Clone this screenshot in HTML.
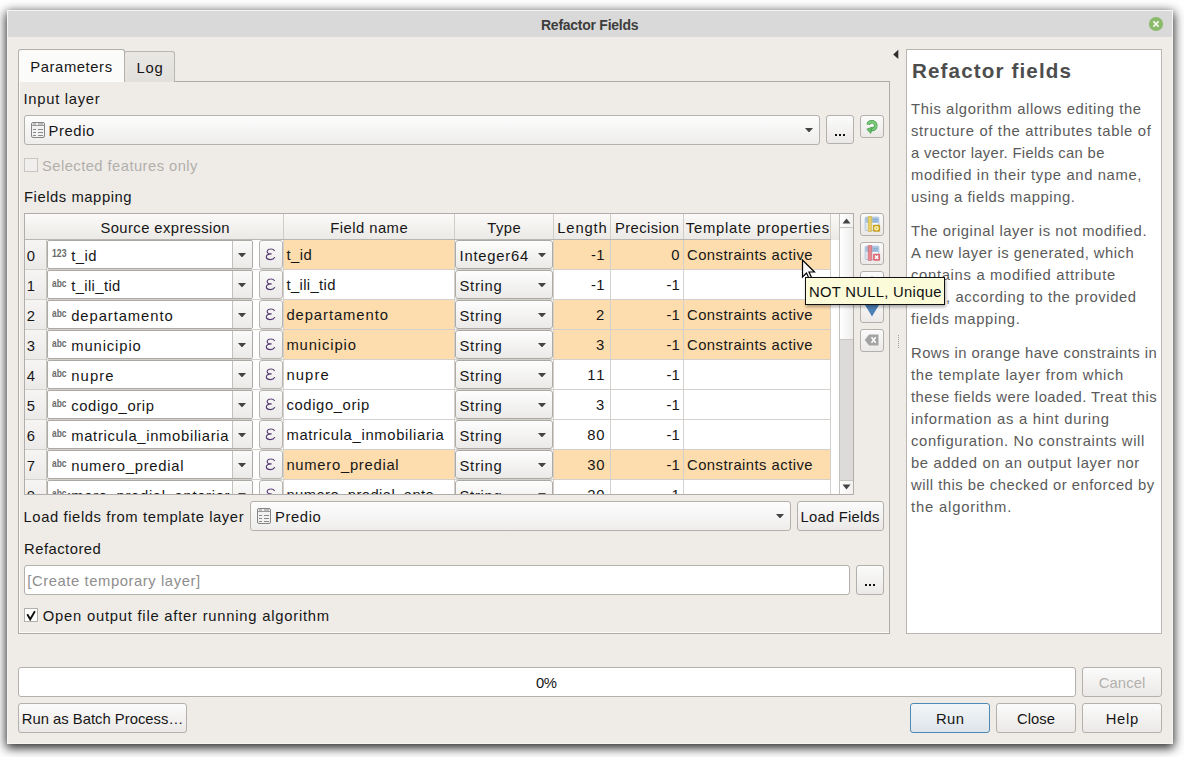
<!DOCTYPE html><html><head><meta charset="utf-8"><style>
*{margin:0;padding:0}
html,body{width:1184px;height:757px;overflow:hidden;background:#ffffff;font-family:"Liberation Sans",sans-serif;position:relative}
.t{position:absolute;white-space:nowrap;font-family:"Liberation Sans",sans-serif}
.b{position:absolute;box-sizing:border-box}
</style></head><body><div class="b" style="left:7px;top:10px;width:1166px;height:734px;background:#efece8;border:1px solid #f6f4f2;box-shadow:0 3px 10px 1px rgba(0,0,0,0.85);"></div>
<div class="b" style="left:8px;top:11px;width:1164px;height:26px;background:#d9d9d9;"></div>
<div class="t" style="left:541.00px;top:17.00px;font-size:14px;line-height:17px;color:#3d3d3d;letter-spacing:-0.260px;font-weight:bold;">Refactor Fields</div>
<svg class="b" style="left:1148px;top:16px" width="16" height="16" viewBox="0 0 16 16"><circle cx="8" cy="8" r="7.1" fill="#8cba6c"/><path d="M5.4 5.4L10.6 10.6M10.6 5.4L5.4 10.6" stroke="#f2f9ec" stroke-width="1.7" stroke-linecap="butt"/></svg>
<div class="b" style="left:18px;top:81px;width:872px;height:553px;border:1px solid #aeaba7;background:#efece8;box-shadow:inset 1px 0 0 #fcfbfa,inset 0 -1px 0 #fcfbfa;"></div>
<div class="b" style="left:124px;top:51px;width:51px;height:31px;border:1px solid #b9b6b2;border-bottom:none;border-radius:3px 3px 0 0;background:linear-gradient(#e9e7e4,#e2e0dd);"></div>
<div class="b" style="left:18px;top:49px;width:107px;height:33px;border:1px solid #b3b0ac;border-bottom:none;border-radius:3px 3px 0 0;background:#fbfbfa;"></div>
<div class="t" style="left:30.30px;top:58.00px;font-size:14.8px;line-height:18px;color:#161616;letter-spacing:0.584px;font-weight:normal;">Parameters</div>
<div class="t" style="left:136.60px;top:59.00px;font-size:14.8px;line-height:18px;color:#161616;letter-spacing:0.726px;font-weight:normal;">Log</div>
<svg class="b" style="left:891px;top:49px" width="9" height="11"><path d="M7.3 0.8L2.2 5.4L7.3 10Z" fill="#2e2e2e"/></svg>
<div class="t" style="left:23.50px;top:90.00px;font-size:14.8px;line-height:18px;color:#161616;letter-spacing:0.711px;font-weight:normal;">Input layer</div>
<div class="b" style="left:24px;top:115px;width:796px;height:30px;border:1px solid #b4b1ad;border-radius:3px;background:linear-gradient(#fdfdfd,#eeedec);"></div>
<svg class="b" style="left:31px;top:122px" width="14" height="16" viewBox="0 0 14 16"><rect x="0.5" y="0.5" width="13" height="15" rx="1.5" fill="#f2f2f2" stroke="#858585"/><path d="M1 3.5H13" stroke="#9a9a9a" stroke-width="1"/><path d="M2 2H5M7 2H12M2 7.5H5M7 7.5H12M2 10.5H5M7 10.5H12M2 13.5H5M7 13.5H12" stroke="#8a8a8a" stroke-width="1.1"/></svg>
<div class="t" style="left:48.50px;top:122.00px;font-size:14.8px;line-height:18px;color:#161616;letter-spacing:0.610px;font-weight:normal;">Predio</div>
<svg class="b" style="left:805.0px;top:127.75px" width="8" height="4.5"><path d="M0 0L8 0L4.0 4.5Z" fill="#444"/></svg>
<div class="b" style="left:826px;top:115px;width:28px;height:29px;border:1px solid #b4b1ad;border-radius:3px;background:linear-gradient(#fbfbfb,#ebe9e7);"></div>
<div class="b" style="left:835px;top:134px;width:2px;height:2px;background:#111;"></div>
<div class="b" style="left:839px;top:134px;width:2px;height:2px;background:#111;"></div>
<div class="b" style="left:843px;top:134px;width:2px;height:2px;background:#111;"></div>
<div class="b" style="left:860px;top:115px;width:24px;height:23px;border:1px solid #b4b1ad;border-radius:3px;background:linear-gradient(#fbfbfb,#ebe9e7);"></div>
<svg class="b" style="left:864px;top:117px" width="17" height="18" viewBox="0 0 17 18"><path d="M4.13 7.59A3.9 3.9 0 1 1 6.25 12.13" fill="none" stroke="#3f9a45" stroke-width="3.6"/><path d="M4.13 7.59A3.9 3.9 0 1 1 6.25 12.13" fill="none" stroke="#80cc7e" stroke-width="2.1"/><path d="M2.9 12.2L8.3 10.2L6.7 16.4Z" fill="#6cbf6a" stroke="#3f9a45" stroke-width="0.8" stroke-linejoin="round"/></svg>
<div class="b" style="left:24px;top:158px;width:14px;height:14px;border:1px solid #c9c6c2;background:#f1efed;"></div>
<div class="t" style="left:42.00px;top:157.00px;font-size:14.8px;line-height:18px;color:#b2afab;letter-spacing:0.430px;font-weight:normal;">Selected features only</div>
<div class="t" style="left:24.00px;top:188.00px;font-size:14.8px;line-height:18px;color:#161616;letter-spacing:0.552px;font-weight:normal;">Fields mapping</div>
<div class="t" style="left:23.50px;top:508.00px;font-size:14.8px;line-height:18px;color:#161616;letter-spacing:0.593px;font-weight:normal;">Load fields from template layer</div>
<div class="b" style="left:250px;top:501px;width:541px;height:30px;border:1px solid #b4b1ad;border-radius:3px;background:linear-gradient(#fdfdfd,#eeedec);"></div>
<svg class="b" style="left:257px;top:508px" width="14" height="16" viewBox="0 0 14 16"><rect x="0.5" y="0.5" width="13" height="15" rx="1.5" fill="#f2f2f2" stroke="#858585"/><path d="M1 3.5H13" stroke="#9a9a9a" stroke-width="1"/><path d="M2 2H5M7 2H12M2 7.5H5M7 7.5H12M2 10.5H5M7 10.5H12M2 13.5H5M7 13.5H12" stroke="#8a8a8a" stroke-width="1.1"/></svg>
<div class="t" style="left:275.00px;top:508.00px;font-size:14.8px;line-height:18px;color:#161616;letter-spacing:0.610px;font-weight:normal;">Predio</div>
<svg class="b" style="left:776.0px;top:513.75px" width="8" height="4.5"><path d="M0 0L8 0L4.0 4.5Z" fill="#444"/></svg>
<div class="b" style="left:797px;top:501px;width:87px;height:30px;border:1px solid #b4b1ad;border-radius:3px;background:linear-gradient(#fbfbfb,#ebe9e7);"></div>
<div class="t" style="left:800.50px;top:508.00px;font-size:14.8px;line-height:18px;color:#161616;letter-spacing:0.236px;font-weight:normal;">Load Fields</div>
<div class="t" style="left:24.00px;top:540.00px;font-size:14.8px;line-height:18px;color:#161616;letter-spacing:0.493px;font-weight:normal;">Refactored</div>
<div class="b" style="left:24px;top:565px;width:826px;height:30px;border:1px solid #b4b1ad;border-radius:3px;background:#ffffff;"></div>
<div class="t" style="left:27.30px;top:572.00px;font-size:14.8px;line-height:18px;color:#8e8e8e;letter-spacing:0.575px;font-weight:normal;">[Create temporary layer]</div>
<div class="b" style="left:856px;top:565px;width:28px;height:30px;border:1px solid #b4b1ad;border-radius:3px;background:linear-gradient(#fbfbfb,#ebe9e7);"></div>
<div class="b" style="left:865px;top:584px;width:2px;height:2px;background:#111;"></div>
<div class="b" style="left:869px;top:584px;width:2px;height:2px;background:#111;"></div>
<div class="b" style="left:873px;top:584px;width:2px;height:2px;background:#111;"></div>
<div class="b" style="left:24px;top:608px;width:14px;height:14px;border:1px solid #b4b1ad;background:#ffffff;"></div>
<svg class="b" style="left:24px;top:608px" width="14" height="14"><path d="M3.3 6.3L6.2 11.3L10.9 3.3" fill="none" stroke="#111" stroke-width="1.9" stroke-linejoin="miter"/></svg>
<div class="t" style="left:42.80px;top:607.00px;font-size:14.8px;line-height:18px;color:#161616;letter-spacing:0.762px;font-weight:normal;">Open output file after running algorithm</div>
<div class="b" style="left:906px;top:49px;width:256px;height:585px;border:1px solid #b9b6b2;background:#ffffff;"></div>
<div class="t" style="left:912.00px;top:58.00px;font-size:20.6px;line-height:25px;color:#4d4d4d;letter-spacing:1.136px;font-weight:bold;">Refactor fields</div>
<div class="t" style="left:911.00px;top:100.00px;font-size:14.8px;line-height:18px;color:#5a5a5a;letter-spacing:0.611px;font-weight:normal;">This algorithm allows editing the</div>
<div class="t" style="left:911.00px;top:122.00px;font-size:14.8px;line-height:18px;color:#5a5a5a;letter-spacing:0.671px;font-weight:normal;">structure of the attributes table of</div>
<div class="t" style="left:911.00px;top:144.00px;font-size:14.8px;line-height:18px;color:#5a5a5a;letter-spacing:0.326px;font-weight:normal;">a vector layer. Fields can be</div>
<div class="t" style="left:911.00px;top:166.00px;font-size:14.8px;line-height:18px;color:#5a5a5a;letter-spacing:0.641px;font-weight:normal;">modified in their type and name,</div>
<div class="t" style="left:911.00px;top:188.00px;font-size:14.8px;line-height:18px;color:#5a5a5a;letter-spacing:0.569px;font-weight:normal;">using a fields mapping.</div>
<div class="t" style="left:911.00px;top:222.00px;font-size:14.8px;line-height:18px;color:#5a5a5a;letter-spacing:0.540px;font-weight:normal;">The original layer is not modified.</div>
<div class="t" style="left:911.00px;top:244.00px;font-size:14.8px;line-height:18px;color:#5a5a5a;letter-spacing:0.485px;font-weight:normal;">A new layer is generated, which</div>
<div class="t" style="left:911.00px;top:266.00px;font-size:14.8px;line-height:18px;color:#5a5a5a;letter-spacing:0.685px;font-weight:normal;">contains a modified attribute</div>
<div class="t" style="left:911.00px;top:288.00px;font-size:14.8px;line-height:18px;color:#5a5a5a;letter-spacing:0.599px;font-weight:normal;">table, according to the provided</div>
<div class="t" style="left:911.00px;top:310.00px;font-size:14.8px;line-height:18px;color:#5a5a5a;letter-spacing:0.667px;font-weight:normal;">fields mapping.</div>
<div class="t" style="left:911.00px;top:344.00px;font-size:14.8px;line-height:18px;color:#5a5a5a;letter-spacing:0.470px;font-weight:normal;">Rows in orange have constraints in</div>
<div class="t" style="left:911.00px;top:366.00px;font-size:14.8px;line-height:18px;color:#5a5a5a;letter-spacing:0.681px;font-weight:normal;">the template layer from which</div>
<div class="t" style="left:911.00px;top:388.00px;font-size:14.8px;line-height:18px;color:#5a5a5a;letter-spacing:0.484px;font-weight:normal;">these fields were loaded. Treat this</div>
<div class="t" style="left:911.00px;top:410.00px;font-size:14.8px;line-height:18px;color:#5a5a5a;letter-spacing:0.722px;font-weight:normal;">information as a hint during</div>
<div class="t" style="left:911.00px;top:432.00px;font-size:14.8px;line-height:18px;color:#5a5a5a;letter-spacing:0.640px;font-weight:normal;">configuration. No constraints will</div>
<div class="t" style="left:911.00px;top:454.00px;font-size:14.8px;line-height:18px;color:#5a5a5a;letter-spacing:0.617px;font-weight:normal;">be added on an output layer nor</div>
<div class="t" style="left:911.00px;top:476.00px;font-size:14.8px;line-height:18px;color:#5a5a5a;letter-spacing:0.497px;font-weight:normal;">will this be checked or enforced by</div>
<div class="t" style="left:911.00px;top:498.00px;font-size:14.8px;line-height:18px;color:#5a5a5a;letter-spacing:0.823px;font-weight:normal;">the algorithm.</div>
<div class="b" style="left:898px;top:335px;width:1px;height:13px;border-left:1px dotted #9a9a9a"></div>
<div class="b" style="left:18px;top:667px;width:1058px;height:30px;border:1px solid #b4b1ad;border-radius:3px;background:#ffffff;"></div>
<div class="t" style="left:535.97px;top:674.00px;font-size:14.8px;line-height:18px;color:#161616;letter-spacing:-0.326px;font-weight:normal;">0%</div>
<div class="b" style="left:1082px;top:667px;width:80px;height:30px;border:1px solid #b4b1ad;border-radius:3px;background:linear-gradient(#fbfbfb,#ebe9e7);"></div>
<div class="t" style="left:1098.66px;top:674.00px;font-size:14.8px;line-height:18px;color:#b3b1ae;letter-spacing:0.120px;font-weight:normal;">Cancel</div>
<div class="b" style="left:18px;top:703px;width:169px;height:30px;border:1px solid #b4b1ad;border-radius:3px;background:linear-gradient(#fbfbfb,#ebe9e7);"></div>
<div class="t" style="left:21.77px;top:710.00px;font-size:14.8px;line-height:18px;color:#161616;letter-spacing:0.012px;font-weight:normal;">Run as Batch Process…</div>
<div class="b" style="left:910px;top:703px;width:80px;height:30px;border:1px solid #4d8ab5;border-radius:3px;background:linear-gradient(#f3f6f8,#dde4ea);"></div>
<div class="t" style="left:936.10px;top:710.00px;font-size:14.8px;line-height:18px;color:#161616;letter-spacing:0.322px;font-weight:normal;">Run</div>
<div class="b" style="left:996px;top:703px;width:80px;height:30px;border:1px solid #b4b1ad;border-radius:3px;background:linear-gradient(#fbfbfb,#ebe9e7);"></div>
<div class="t" style="left:1016.97px;top:710.00px;font-size:14.8px;line-height:18px;color:#161616;letter-spacing:0.053px;font-weight:normal;">Close</div>
<div class="b" style="left:1082px;top:703px;width:80px;height:30px;border:1px solid #b4b1ad;border-radius:3px;background:linear-gradient(#fbfbfb,#ebe9e7);"></div>
<div class="t" style="left:1105.67px;top:710.00px;font-size:14.8px;line-height:18px;color:#161616;letter-spacing:0.738px;font-weight:normal;">Help</div>
<div class="b" style="left:24px;top:213px;width:830px;height:282px;border:1px solid #b0adaa;background:#ffffff;"></div>
<div class="b" style="left:25px;top:214px;width:814px;height:26px;background:linear-gradient(#fbfaf8,#ebe9e6);"></div>
<div class="b" style="left:25px;top:239px;width:806px;height:1px;background:#b9b6b2;"></div>
<div class="b" style="left:283px;top:214px;width:1px;height:25px;background:#d0cdc9;"></div>
<div class="b" style="left:454px;top:214px;width:1px;height:25px;background:#d0cdc9;"></div>
<div class="b" style="left:553px;top:214px;width:1px;height:25px;background:#d0cdc9;"></div>
<div class="b" style="left:610px;top:214px;width:1px;height:25px;background:#d0cdc9;"></div>
<div class="b" style="left:683px;top:214px;width:1px;height:25px;background:#d0cdc9;"></div>
<div class="b" style="left:830px;top:214px;width:1px;height:25px;background:#d0cdc9;"></div>
<div class="t" style="left:100.44px;top:219.00px;font-size:14.8px;line-height:18px;color:#161616;letter-spacing:0.409px;font-weight:normal;">Source expression</div>
<div class="t" style="left:330.36px;top:219.00px;font-size:14.8px;line-height:18px;color:#161616;letter-spacing:0.452px;font-weight:normal;">Field name</div>
<div class="t" style="left:487.19px;top:219.00px;font-size:14.8px;line-height:18px;color:#161616;letter-spacing:0.509px;font-weight:normal;">Type</div>
<div class="t" style="left:557.26px;top:219.00px;font-size:14.8px;line-height:18px;color:#161616;letter-spacing:0.841px;font-weight:normal;">Length</div>
<div class="t" style="left:614.94px;top:219.00px;font-size:14.8px;line-height:18px;color:#161616;letter-spacing:0.406px;font-weight:normal;">Precision</div>
<div class="t" style="left:685.85px;top:219.00px;font-size:14.8px;line-height:18px;color:#161616;letter-spacing:0.740px;font-weight:normal;">Template properties</div>
<div class="b" style="left:839px;top:214px;width:14px;height:280px;border-left:1px solid #c4c1bd;background:#dcdbd9;"></div>
<div class="b" style="left:840px;top:214px;width:13px;height:14px;background:linear-gradient(90deg,#ffffff,#f2f1f0);border-bottom:1px solid #c9c6c2;"></div>
<div class="b" style="left:840px;top:228px;width:13px;height:112px;background:linear-gradient(90deg,#ffffff,#efeeed);border-bottom:1px solid #c9c6c2;"></div>
<div class="b" style="left:840px;top:480px;width:13px;height:14px;background:linear-gradient(90deg,#ffffff,#f2f1f0);border-top:1px solid #c9c6c2;"></div>
<svg class="b" style="left:842px;top:218px" width="9" height="6"><path d="M0.5 5.5L8.5 5.5L4.5 0.5Z" fill="#444"/></svg>
<svg class="b" style="left:842px;top:484px" width="9" height="6"><path d="M0.5 0.5L8.5 0.5L4.5 5.5Z" fill="#444"/></svg>
<div class="b" style="left:25px;top:240px;width:814px;height:254px;overflow:hidden">
<div class="b" style="left:0px;top:0px;width:21px;height:29px;background:linear-gradient(#f6f5f3,#ebeae8);"></div>
<div class="b" style="left:21px;top:0px;width:1px;height:29px;background:#c9c6c2;"></div>
<div class="b" style="left:0px;top:29px;width:22px;height:1px;background:#d4d1cd;"></div>
<div class="t" style="left:1.80px;top:7.00px;font-size:14.8px;line-height:18px;color:#161616;letter-spacing:0.000px;font-weight:normal;">0</div>
<div class="b" style="left:22px;top:0px;width:236px;height:29px;background:#ffffff;"></div>
<div class="b" style="left:259px;top:0px;width:170px;height:29px;background:#fddcad;"></div>
<div class="b" style="left:529px;top:0px;width:56px;height:29px;background:#fddcad;"></div>
<div class="b" style="left:586px;top:0px;width:72px;height:29px;background:#fddcad;"></div>
<div class="b" style="left:659px;top:0px;width:146px;height:29px;background:#fddcad;"></div>
<div class="b" style="left:22px;top:29px;width:784px;height:1px;background:#d4d1cd;"></div>
<div class="b" style="left:258px;top:0px;width:1px;height:30px;background:#d4d1cd;"></div>
<div class="b" style="left:429px;top:0px;width:1px;height:30px;background:#d4d1cd;"></div>
<div class="b" style="left:528px;top:0px;width:1px;height:30px;background:#d4d1cd;"></div>
<div class="b" style="left:585px;top:0px;width:1px;height:30px;background:#d4d1cd;"></div>
<div class="b" style="left:658px;top:0px;width:1px;height:30px;background:#d4d1cd;"></div>
<div class="b" style="left:805px;top:0px;width:1px;height:30px;background:#d4d1cd;"></div>
<div class="b" style="left:22px;top:0px;width:206px;height:29px;border:1px solid #adaaa6;border-radius:2px;background:#ffffff;"></div>
<div class="b" style="left:207px;top:1px;width:20px;height:27px;border-left:1px solid #c4c1bd;background:linear-gradient(#fafafa,#ebeae8);border-radius:0 2px 2px 0;"></div>
<svg class="b" style="left:213.0px;top:12.75px" width="8" height="4.5"><path d="M0 0L8 0L4.0 4.5Z" fill="#444"/></svg>
<div class="b" style="left:45px;top:0px;width:161px;height:30px;overflow:hidden">
<div class="t" style="left:1.20px;top:7.00px;font-size:14.8px;line-height:18px;color:#161616;letter-spacing:0.476px;font-weight:normal;">t_id</div>
</div>
<div class="t" style="left:26.60px;top:8.00px;font-size:10px;line-height:12px;color:#6a6a6a;letter-spacing:0.000px;font-weight:bold;transform:scaleX(0.869);transform-origin:0 0;">123</div>
<div class="b" style="left:234px;top:0px;width:24px;height:29px;border:1px solid #b8b5b1;border-radius:3px;background:linear-gradient(#fbfbfb,#ebeae8);"></div>
<svg class="b" style="left:240.3px;top:7.5px" width="11" height="13" viewBox="0 0 11 13"><path d="M9.3 2.6C8.6 1.2 6.9 0.9 5.6 1C3.4 1.1 2.1 2.3 2.2 3.7C2.3 5.2 3.9 5.9 6.2 5.9M6.2 5.9C3.4 5.9 1.2 7 1.3 8.9C1.4 10.9 3.6 11.6 5.6 11.6C7.4 11.6 8.9 10.9 9.6 9.6" fill="none" stroke="#553a72" stroke-width="1.15" stroke-linecap="round"/></svg>
<div class="b" style="left:259px;top:0px;width:170px;height:30px;overflow:hidden">
<div class="t" style="left:2.40px;top:6.00px;font-size:14.8px;line-height:18px;color:#161616;letter-spacing:0.476px;font-weight:normal;">t_id</div>
</div>
<div class="b" style="left:430px;top:0px;width:98px;height:29px;border:1px solid #adaaa6;border-radius:3px;background:linear-gradient(#fdfdfd,#ebeae8);"></div>
<div class="t" style="left:434.50px;top:7.00px;font-size:14.8px;line-height:18px;color:#161616;letter-spacing:0.775px;font-weight:normal;">Integer64</div>
<svg class="b" style="left:513.0px;top:12.75px" width="8" height="4.5"><path d="M0 0L8 0L4.0 4.5Z" fill="#444"/></svg>
<div class="t" style="left:566.10px;top:6.00px;font-size:14.8px;line-height:18px;color:#161616;letter-spacing:0.243px;font-weight:normal;">-1</div>
<div class="t" style="left:646.22px;top:6.00px;font-size:14.8px;line-height:18px;color:#161616;letter-spacing:0.000px;font-weight:normal;">0</div>
<div class="t" style="left:662.00px;top:6.00px;font-size:14.8px;line-height:18px;color:#161616;letter-spacing:0.468px;font-weight:normal;">Constraints active</div>
<div class="b" style="left:0px;top:30px;width:21px;height:29px;background:linear-gradient(#f6f5f3,#ebeae8);"></div>
<div class="b" style="left:21px;top:30px;width:1px;height:29px;background:#c9c6c2;"></div>
<div class="b" style="left:0px;top:59px;width:22px;height:1px;background:#d4d1cd;"></div>
<div class="t" style="left:1.80px;top:37.00px;font-size:14.8px;line-height:18px;color:#161616;letter-spacing:0.000px;font-weight:normal;">1</div>
<div class="b" style="left:22px;top:30px;width:236px;height:29px;background:#ffffff;"></div>
<div class="b" style="left:22px;top:59px;width:784px;height:1px;background:#d4d1cd;"></div>
<div class="b" style="left:258px;top:30px;width:1px;height:30px;background:#d4d1cd;"></div>
<div class="b" style="left:429px;top:30px;width:1px;height:30px;background:#d4d1cd;"></div>
<div class="b" style="left:528px;top:30px;width:1px;height:30px;background:#d4d1cd;"></div>
<div class="b" style="left:585px;top:30px;width:1px;height:30px;background:#d4d1cd;"></div>
<div class="b" style="left:658px;top:30px;width:1px;height:30px;background:#d4d1cd;"></div>
<div class="b" style="left:805px;top:30px;width:1px;height:30px;background:#d4d1cd;"></div>
<div class="b" style="left:22px;top:30px;width:206px;height:29px;border:1px solid #adaaa6;border-radius:2px;background:#ffffff;"></div>
<div class="b" style="left:207px;top:31px;width:20px;height:27px;border-left:1px solid #c4c1bd;background:linear-gradient(#fafafa,#ebeae8);border-radius:0 2px 2px 0;"></div>
<svg class="b" style="left:213.0px;top:42.75px" width="8" height="4.5"><path d="M0 0L8 0L4.0 4.5Z" fill="#444"/></svg>
<div class="b" style="left:45px;top:30px;width:161px;height:30px;overflow:hidden">
<div class="t" style="left:1.20px;top:7.00px;font-size:14.8px;line-height:18px;color:#161616;letter-spacing:0.379px;font-weight:normal;">t_ili_tid</div>
</div>
<div class="t" style="left:26.60px;top:38.00px;font-size:10px;line-height:12px;color:#6a6a6a;letter-spacing:0.000px;font-weight:bold;transform:scaleX(0.841);transform-origin:0 0;">abc</div>
<div class="b" style="left:234px;top:30px;width:24px;height:29px;border:1px solid #b8b5b1;border-radius:3px;background:linear-gradient(#fbfbfb,#ebeae8);"></div>
<svg class="b" style="left:240.3px;top:37.5px" width="11" height="13" viewBox="0 0 11 13"><path d="M9.3 2.6C8.6 1.2 6.9 0.9 5.6 1C3.4 1.1 2.1 2.3 2.2 3.7C2.3 5.2 3.9 5.9 6.2 5.9M6.2 5.9C3.4 5.9 1.2 7 1.3 8.9C1.4 10.9 3.6 11.6 5.6 11.6C7.4 11.6 8.9 10.9 9.6 9.6" fill="none" stroke="#553a72" stroke-width="1.15" stroke-linecap="round"/></svg>
<div class="b" style="left:259px;top:30px;width:170px;height:30px;overflow:hidden">
<div class="t" style="left:2.40px;top:6.00px;font-size:14.8px;line-height:18px;color:#161616;letter-spacing:0.379px;font-weight:normal;">t_ili_tid</div>
</div>
<div class="b" style="left:430px;top:30px;width:98px;height:29px;border:1px solid #adaaa6;border-radius:3px;background:linear-gradient(#fdfdfd,#ebeae8);"></div>
<div class="t" style="left:434.50px;top:37.00px;font-size:14.8px;line-height:18px;color:#161616;letter-spacing:0.705px;font-weight:normal;">String</div>
<svg class="b" style="left:513.0px;top:42.75px" width="8" height="4.5"><path d="M0 0L8 0L4.0 4.5Z" fill="#444"/></svg>
<div class="t" style="left:566.10px;top:36.00px;font-size:14.8px;line-height:18px;color:#161616;letter-spacing:0.243px;font-weight:normal;">-1</div>
<div class="t" style="left:641.40px;top:36.00px;font-size:14.8px;line-height:18px;color:#161616;letter-spacing:0.243px;font-weight:normal;">-1</div>
<div class="b" style="left:0px;top:60px;width:21px;height:29px;background:linear-gradient(#f6f5f3,#ebeae8);"></div>
<div class="b" style="left:21px;top:60px;width:1px;height:29px;background:#c9c6c2;"></div>
<div class="b" style="left:0px;top:89px;width:22px;height:1px;background:#d4d1cd;"></div>
<div class="t" style="left:1.80px;top:67.00px;font-size:14.8px;line-height:18px;color:#161616;letter-spacing:0.000px;font-weight:normal;">2</div>
<div class="b" style="left:22px;top:60px;width:236px;height:29px;background:#ffffff;"></div>
<div class="b" style="left:259px;top:60px;width:170px;height:29px;background:#fddcad;"></div>
<div class="b" style="left:529px;top:60px;width:56px;height:29px;background:#fddcad;"></div>
<div class="b" style="left:586px;top:60px;width:72px;height:29px;background:#fddcad;"></div>
<div class="b" style="left:659px;top:60px;width:146px;height:29px;background:#fddcad;"></div>
<div class="b" style="left:22px;top:89px;width:784px;height:1px;background:#d4d1cd;"></div>
<div class="b" style="left:258px;top:60px;width:1px;height:30px;background:#d4d1cd;"></div>
<div class="b" style="left:429px;top:60px;width:1px;height:30px;background:#d4d1cd;"></div>
<div class="b" style="left:528px;top:60px;width:1px;height:30px;background:#d4d1cd;"></div>
<div class="b" style="left:585px;top:60px;width:1px;height:30px;background:#d4d1cd;"></div>
<div class="b" style="left:658px;top:60px;width:1px;height:30px;background:#d4d1cd;"></div>
<div class="b" style="left:805px;top:60px;width:1px;height:30px;background:#d4d1cd;"></div>
<div class="b" style="left:22px;top:60px;width:206px;height:29px;border:1px solid #adaaa6;border-radius:2px;background:#ffffff;"></div>
<div class="b" style="left:207px;top:61px;width:20px;height:27px;border-left:1px solid #c4c1bd;background:linear-gradient(#fafafa,#ebeae8);border-radius:0 2px 2px 0;"></div>
<svg class="b" style="left:213.0px;top:72.75px" width="8" height="4.5"><path d="M0 0L8 0L4.0 4.5Z" fill="#444"/></svg>
<div class="b" style="left:45px;top:60px;width:161px;height:30px;overflow:hidden">
<div class="t" style="left:1.20px;top:7.00px;font-size:14.8px;line-height:18px;color:#161616;letter-spacing:0.928px;font-weight:normal;">departamento</div>
</div>
<div class="t" style="left:26.60px;top:68.00px;font-size:10px;line-height:12px;color:#6a6a6a;letter-spacing:0.000px;font-weight:bold;transform:scaleX(0.841);transform-origin:0 0;">abc</div>
<div class="b" style="left:234px;top:60px;width:24px;height:29px;border:1px solid #b8b5b1;border-radius:3px;background:linear-gradient(#fbfbfb,#ebeae8);"></div>
<svg class="b" style="left:240.3px;top:67.5px" width="11" height="13" viewBox="0 0 11 13"><path d="M9.3 2.6C8.6 1.2 6.9 0.9 5.6 1C3.4 1.1 2.1 2.3 2.2 3.7C2.3 5.2 3.9 5.9 6.2 5.9M6.2 5.9C3.4 5.9 1.2 7 1.3 8.9C1.4 10.9 3.6 11.6 5.6 11.6C7.4 11.6 8.9 10.9 9.6 9.6" fill="none" stroke="#553a72" stroke-width="1.15" stroke-linecap="round"/></svg>
<div class="b" style="left:259px;top:60px;width:170px;height:30px;overflow:hidden">
<div class="t" style="left:2.40px;top:6.00px;font-size:14.8px;line-height:18px;color:#161616;letter-spacing:0.928px;font-weight:normal;">departamento</div>
</div>
<div class="b" style="left:430px;top:60px;width:98px;height:29px;border:1px solid #adaaa6;border-radius:3px;background:linear-gradient(#fdfdfd,#ebeae8);"></div>
<div class="t" style="left:434.50px;top:67.00px;font-size:14.8px;line-height:18px;color:#161616;letter-spacing:0.705px;font-weight:normal;">String</div>
<svg class="b" style="left:513.0px;top:72.75px" width="8" height="4.5"><path d="M0 0L8 0L4.0 4.5Z" fill="#444"/></svg>
<div class="t" style="left:570.92px;top:66.00px;font-size:14.8px;line-height:18px;color:#161616;letter-spacing:0.000px;font-weight:normal;">2</div>
<div class="t" style="left:641.40px;top:66.00px;font-size:14.8px;line-height:18px;color:#161616;letter-spacing:0.243px;font-weight:normal;">-1</div>
<div class="t" style="left:662.00px;top:66.00px;font-size:14.8px;line-height:18px;color:#161616;letter-spacing:0.468px;font-weight:normal;">Constraints active</div>
<div class="b" style="left:0px;top:90px;width:21px;height:29px;background:linear-gradient(#f6f5f3,#ebeae8);"></div>
<div class="b" style="left:21px;top:90px;width:1px;height:29px;background:#c9c6c2;"></div>
<div class="b" style="left:0px;top:119px;width:22px;height:1px;background:#d4d1cd;"></div>
<div class="t" style="left:1.80px;top:97.00px;font-size:14.8px;line-height:18px;color:#161616;letter-spacing:0.000px;font-weight:normal;">3</div>
<div class="b" style="left:22px;top:90px;width:236px;height:29px;background:#ffffff;"></div>
<div class="b" style="left:259px;top:90px;width:170px;height:29px;background:#fddcad;"></div>
<div class="b" style="left:529px;top:90px;width:56px;height:29px;background:#fddcad;"></div>
<div class="b" style="left:586px;top:90px;width:72px;height:29px;background:#fddcad;"></div>
<div class="b" style="left:659px;top:90px;width:146px;height:29px;background:#fddcad;"></div>
<div class="b" style="left:22px;top:119px;width:784px;height:1px;background:#d4d1cd;"></div>
<div class="b" style="left:258px;top:90px;width:1px;height:30px;background:#d4d1cd;"></div>
<div class="b" style="left:429px;top:90px;width:1px;height:30px;background:#d4d1cd;"></div>
<div class="b" style="left:528px;top:90px;width:1px;height:30px;background:#d4d1cd;"></div>
<div class="b" style="left:585px;top:90px;width:1px;height:30px;background:#d4d1cd;"></div>
<div class="b" style="left:658px;top:90px;width:1px;height:30px;background:#d4d1cd;"></div>
<div class="b" style="left:805px;top:90px;width:1px;height:30px;background:#d4d1cd;"></div>
<div class="b" style="left:22px;top:90px;width:206px;height:29px;border:1px solid #adaaa6;border-radius:2px;background:#ffffff;"></div>
<div class="b" style="left:207px;top:91px;width:20px;height:27px;border-left:1px solid #c4c1bd;background:linear-gradient(#fafafa,#ebeae8);border-radius:0 2px 2px 0;"></div>
<svg class="b" style="left:213.0px;top:102.75px" width="8" height="4.5"><path d="M0 0L8 0L4.0 4.5Z" fill="#444"/></svg>
<div class="b" style="left:45px;top:90px;width:161px;height:30px;overflow:hidden">
<div class="t" style="left:1.20px;top:7.00px;font-size:14.8px;line-height:18px;color:#161616;letter-spacing:0.890px;font-weight:normal;">municipio</div>
</div>
<div class="t" style="left:26.60px;top:98.00px;font-size:10px;line-height:12px;color:#6a6a6a;letter-spacing:0.000px;font-weight:bold;transform:scaleX(0.841);transform-origin:0 0;">abc</div>
<div class="b" style="left:234px;top:90px;width:24px;height:29px;border:1px solid #b8b5b1;border-radius:3px;background:linear-gradient(#fbfbfb,#ebeae8);"></div>
<svg class="b" style="left:240.3px;top:97.5px" width="11" height="13" viewBox="0 0 11 13"><path d="M9.3 2.6C8.6 1.2 6.9 0.9 5.6 1C3.4 1.1 2.1 2.3 2.2 3.7C2.3 5.2 3.9 5.9 6.2 5.9M6.2 5.9C3.4 5.9 1.2 7 1.3 8.9C1.4 10.9 3.6 11.6 5.6 11.6C7.4 11.6 8.9 10.9 9.6 9.6" fill="none" stroke="#553a72" stroke-width="1.15" stroke-linecap="round"/></svg>
<div class="b" style="left:259px;top:90px;width:170px;height:30px;overflow:hidden">
<div class="t" style="left:2.40px;top:6.00px;font-size:14.8px;line-height:18px;color:#161616;letter-spacing:0.890px;font-weight:normal;">municipio</div>
</div>
<div class="b" style="left:430px;top:90px;width:98px;height:29px;border:1px solid #adaaa6;border-radius:3px;background:linear-gradient(#fdfdfd,#ebeae8);"></div>
<div class="t" style="left:434.50px;top:97.00px;font-size:14.8px;line-height:18px;color:#161616;letter-spacing:0.705px;font-weight:normal;">String</div>
<svg class="b" style="left:513.0px;top:102.75px" width="8" height="4.5"><path d="M0 0L8 0L4.0 4.5Z" fill="#444"/></svg>
<div class="t" style="left:570.92px;top:96.00px;font-size:14.8px;line-height:18px;color:#161616;letter-spacing:0.000px;font-weight:normal;">3</div>
<div class="t" style="left:641.40px;top:96.00px;font-size:14.8px;line-height:18px;color:#161616;letter-spacing:0.243px;font-weight:normal;">-1</div>
<div class="t" style="left:662.00px;top:96.00px;font-size:14.8px;line-height:18px;color:#161616;letter-spacing:0.468px;font-weight:normal;">Constraints active</div>
<div class="b" style="left:0px;top:120px;width:21px;height:29px;background:linear-gradient(#f6f5f3,#ebeae8);"></div>
<div class="b" style="left:21px;top:120px;width:1px;height:29px;background:#c9c6c2;"></div>
<div class="b" style="left:0px;top:149px;width:22px;height:1px;background:#d4d1cd;"></div>
<div class="t" style="left:1.80px;top:127.00px;font-size:14.8px;line-height:18px;color:#161616;letter-spacing:0.000px;font-weight:normal;">4</div>
<div class="b" style="left:22px;top:120px;width:236px;height:29px;background:#ffffff;"></div>
<div class="b" style="left:22px;top:149px;width:784px;height:1px;background:#d4d1cd;"></div>
<div class="b" style="left:258px;top:120px;width:1px;height:30px;background:#d4d1cd;"></div>
<div class="b" style="left:429px;top:120px;width:1px;height:30px;background:#d4d1cd;"></div>
<div class="b" style="left:528px;top:120px;width:1px;height:30px;background:#d4d1cd;"></div>
<div class="b" style="left:585px;top:120px;width:1px;height:30px;background:#d4d1cd;"></div>
<div class="b" style="left:658px;top:120px;width:1px;height:30px;background:#d4d1cd;"></div>
<div class="b" style="left:805px;top:120px;width:1px;height:30px;background:#d4d1cd;"></div>
<div class="b" style="left:22px;top:120px;width:206px;height:29px;border:1px solid #adaaa6;border-radius:2px;background:#ffffff;"></div>
<div class="b" style="left:207px;top:121px;width:20px;height:27px;border-left:1px solid #c4c1bd;background:linear-gradient(#fafafa,#ebeae8);border-radius:0 2px 2px 0;"></div>
<svg class="b" style="left:213.0px;top:132.75px" width="8" height="4.5"><path d="M0 0L8 0L4.0 4.5Z" fill="#444"/></svg>
<div class="b" style="left:45px;top:120px;width:161px;height:30px;overflow:hidden">
<div class="t" style="left:1.20px;top:7.00px;font-size:14.8px;line-height:18px;color:#161616;letter-spacing:1.136px;font-weight:normal;">nupre</div>
</div>
<div class="t" style="left:26.60px;top:128.00px;font-size:10px;line-height:12px;color:#6a6a6a;letter-spacing:0.000px;font-weight:bold;transform:scaleX(0.841);transform-origin:0 0;">abc</div>
<div class="b" style="left:234px;top:120px;width:24px;height:29px;border:1px solid #b8b5b1;border-radius:3px;background:linear-gradient(#fbfbfb,#ebeae8);"></div>
<svg class="b" style="left:240.3px;top:127.5px" width="11" height="13" viewBox="0 0 11 13"><path d="M9.3 2.6C8.6 1.2 6.9 0.9 5.6 1C3.4 1.1 2.1 2.3 2.2 3.7C2.3 5.2 3.9 5.9 6.2 5.9M6.2 5.9C3.4 5.9 1.2 7 1.3 8.9C1.4 10.9 3.6 11.6 5.6 11.6C7.4 11.6 8.9 10.9 9.6 9.6" fill="none" stroke="#553a72" stroke-width="1.15" stroke-linecap="round"/></svg>
<div class="b" style="left:259px;top:120px;width:170px;height:30px;overflow:hidden">
<div class="t" style="left:2.40px;top:6.00px;font-size:14.8px;line-height:18px;color:#161616;letter-spacing:1.136px;font-weight:normal;">nupre</div>
</div>
<div class="b" style="left:430px;top:120px;width:98px;height:29px;border:1px solid #adaaa6;border-radius:3px;background:linear-gradient(#fdfdfd,#ebeae8);"></div>
<div class="t" style="left:434.50px;top:127.00px;font-size:14.8px;line-height:18px;color:#161616;letter-spacing:0.705px;font-weight:normal;">String</div>
<svg class="b" style="left:513.0px;top:132.75px" width="8" height="4.5"><path d="M0 0L8 0L4.0 4.5Z" fill="#444"/></svg>
<div class="t" style="left:562.35px;top:126.00px;font-size:14.8px;line-height:18px;color:#161616;letter-spacing:1.787px;font-weight:normal;">11</div>
<div class="t" style="left:641.40px;top:126.00px;font-size:14.8px;line-height:18px;color:#161616;letter-spacing:0.243px;font-weight:normal;">-1</div>
<div class="b" style="left:0px;top:150px;width:21px;height:29px;background:linear-gradient(#f6f5f3,#ebeae8);"></div>
<div class="b" style="left:21px;top:150px;width:1px;height:29px;background:#c9c6c2;"></div>
<div class="b" style="left:0px;top:179px;width:22px;height:1px;background:#d4d1cd;"></div>
<div class="t" style="left:1.80px;top:157.00px;font-size:14.8px;line-height:18px;color:#161616;letter-spacing:0.000px;font-weight:normal;">5</div>
<div class="b" style="left:22px;top:150px;width:236px;height:29px;background:#ffffff;"></div>
<div class="b" style="left:22px;top:179px;width:784px;height:1px;background:#d4d1cd;"></div>
<div class="b" style="left:258px;top:150px;width:1px;height:30px;background:#d4d1cd;"></div>
<div class="b" style="left:429px;top:150px;width:1px;height:30px;background:#d4d1cd;"></div>
<div class="b" style="left:528px;top:150px;width:1px;height:30px;background:#d4d1cd;"></div>
<div class="b" style="left:585px;top:150px;width:1px;height:30px;background:#d4d1cd;"></div>
<div class="b" style="left:658px;top:150px;width:1px;height:30px;background:#d4d1cd;"></div>
<div class="b" style="left:805px;top:150px;width:1px;height:30px;background:#d4d1cd;"></div>
<div class="b" style="left:22px;top:150px;width:206px;height:29px;border:1px solid #adaaa6;border-radius:2px;background:#ffffff;"></div>
<div class="b" style="left:207px;top:151px;width:20px;height:27px;border-left:1px solid #c4c1bd;background:linear-gradient(#fafafa,#ebeae8);border-radius:0 2px 2px 0;"></div>
<svg class="b" style="left:213.0px;top:162.75px" width="8" height="4.5"><path d="M0 0L8 0L4.0 4.5Z" fill="#444"/></svg>
<div class="b" style="left:45px;top:150px;width:161px;height:30px;overflow:hidden">
<div class="t" style="left:1.20px;top:7.00px;font-size:14.8px;line-height:18px;color:#161616;letter-spacing:0.626px;font-weight:normal;">codigo_orip</div>
</div>
<div class="t" style="left:26.60px;top:158.00px;font-size:10px;line-height:12px;color:#6a6a6a;letter-spacing:0.000px;font-weight:bold;transform:scaleX(0.841);transform-origin:0 0;">abc</div>
<div class="b" style="left:234px;top:150px;width:24px;height:29px;border:1px solid #b8b5b1;border-radius:3px;background:linear-gradient(#fbfbfb,#ebeae8);"></div>
<svg class="b" style="left:240.3px;top:157.5px" width="11" height="13" viewBox="0 0 11 13"><path d="M9.3 2.6C8.6 1.2 6.9 0.9 5.6 1C3.4 1.1 2.1 2.3 2.2 3.7C2.3 5.2 3.9 5.9 6.2 5.9M6.2 5.9C3.4 5.9 1.2 7 1.3 8.9C1.4 10.9 3.6 11.6 5.6 11.6C7.4 11.6 8.9 10.9 9.6 9.6" fill="none" stroke="#553a72" stroke-width="1.15" stroke-linecap="round"/></svg>
<div class="b" style="left:259px;top:150px;width:170px;height:30px;overflow:hidden">
<div class="t" style="left:2.40px;top:6.00px;font-size:14.8px;line-height:18px;color:#161616;letter-spacing:0.626px;font-weight:normal;">codigo_orip</div>
</div>
<div class="b" style="left:430px;top:150px;width:98px;height:29px;border:1px solid #adaaa6;border-radius:3px;background:linear-gradient(#fdfdfd,#ebeae8);"></div>
<div class="t" style="left:434.50px;top:157.00px;font-size:14.8px;line-height:18px;color:#161616;letter-spacing:0.705px;font-weight:normal;">String</div>
<svg class="b" style="left:513.0px;top:162.75px" width="8" height="4.5"><path d="M0 0L8 0L4.0 4.5Z" fill="#444"/></svg>
<div class="t" style="left:570.92px;top:156.00px;font-size:14.8px;line-height:18px;color:#161616;letter-spacing:0.000px;font-weight:normal;">3</div>
<div class="t" style="left:641.40px;top:156.00px;font-size:14.8px;line-height:18px;color:#161616;letter-spacing:0.243px;font-weight:normal;">-1</div>
<div class="b" style="left:0px;top:180px;width:21px;height:29px;background:linear-gradient(#f6f5f3,#ebeae8);"></div>
<div class="b" style="left:21px;top:180px;width:1px;height:29px;background:#c9c6c2;"></div>
<div class="b" style="left:0px;top:209px;width:22px;height:1px;background:#d4d1cd;"></div>
<div class="t" style="left:1.80px;top:187.00px;font-size:14.8px;line-height:18px;color:#161616;letter-spacing:0.000px;font-weight:normal;">6</div>
<div class="b" style="left:22px;top:180px;width:236px;height:29px;background:#ffffff;"></div>
<div class="b" style="left:22px;top:209px;width:784px;height:1px;background:#d4d1cd;"></div>
<div class="b" style="left:258px;top:180px;width:1px;height:30px;background:#d4d1cd;"></div>
<div class="b" style="left:429px;top:180px;width:1px;height:30px;background:#d4d1cd;"></div>
<div class="b" style="left:528px;top:180px;width:1px;height:30px;background:#d4d1cd;"></div>
<div class="b" style="left:585px;top:180px;width:1px;height:30px;background:#d4d1cd;"></div>
<div class="b" style="left:658px;top:180px;width:1px;height:30px;background:#d4d1cd;"></div>
<div class="b" style="left:805px;top:180px;width:1px;height:30px;background:#d4d1cd;"></div>
<div class="b" style="left:22px;top:180px;width:206px;height:29px;border:1px solid #adaaa6;border-radius:2px;background:#ffffff;"></div>
<div class="b" style="left:207px;top:181px;width:20px;height:27px;border-left:1px solid #c4c1bd;background:linear-gradient(#fafafa,#ebeae8);border-radius:0 2px 2px 0;"></div>
<svg class="b" style="left:213.0px;top:192.75px" width="8" height="4.5"><path d="M0 0L8 0L4.0 4.5Z" fill="#444"/></svg>
<div class="b" style="left:45px;top:180px;width:161px;height:30px;overflow:hidden">
<div class="t" style="left:1.20px;top:7.00px;font-size:14.8px;line-height:18px;color:#161616;letter-spacing:0.678px;font-weight:normal;">matricula_inmobiliaria</div>
</div>
<div class="t" style="left:26.60px;top:188.00px;font-size:10px;line-height:12px;color:#6a6a6a;letter-spacing:0.000px;font-weight:bold;transform:scaleX(0.841);transform-origin:0 0;">abc</div>
<div class="b" style="left:234px;top:180px;width:24px;height:29px;border:1px solid #b8b5b1;border-radius:3px;background:linear-gradient(#fbfbfb,#ebeae8);"></div>
<svg class="b" style="left:240.3px;top:187.5px" width="11" height="13" viewBox="0 0 11 13"><path d="M9.3 2.6C8.6 1.2 6.9 0.9 5.6 1C3.4 1.1 2.1 2.3 2.2 3.7C2.3 5.2 3.9 5.9 6.2 5.9M6.2 5.9C3.4 5.9 1.2 7 1.3 8.9C1.4 10.9 3.6 11.6 5.6 11.6C7.4 11.6 8.9 10.9 9.6 9.6" fill="none" stroke="#553a72" stroke-width="1.15" stroke-linecap="round"/></svg>
<div class="b" style="left:259px;top:180px;width:170px;height:30px;overflow:hidden">
<div class="t" style="left:2.40px;top:6.00px;font-size:14.8px;line-height:18px;color:#161616;letter-spacing:0.678px;font-weight:normal;">matricula_inmobiliaria</div>
</div>
<div class="b" style="left:430px;top:180px;width:98px;height:29px;border:1px solid #adaaa6;border-radius:3px;background:linear-gradient(#fdfdfd,#ebeae8);"></div>
<div class="t" style="left:434.50px;top:187.00px;font-size:14.8px;line-height:18px;color:#161616;letter-spacing:0.705px;font-weight:normal;">String</div>
<svg class="b" style="left:513.0px;top:192.75px" width="8" height="4.5"><path d="M0 0L8 0L4.0 4.5Z" fill="#444"/></svg>
<div class="t" style="left:562.35px;top:186.00px;font-size:14.8px;line-height:18px;color:#161616;letter-spacing:0.689px;font-weight:normal;">80</div>
<div class="t" style="left:641.40px;top:186.00px;font-size:14.8px;line-height:18px;color:#161616;letter-spacing:0.243px;font-weight:normal;">-1</div>
<div class="b" style="left:0px;top:210px;width:21px;height:29px;background:linear-gradient(#f6f5f3,#ebeae8);"></div>
<div class="b" style="left:21px;top:210px;width:1px;height:29px;background:#c9c6c2;"></div>
<div class="b" style="left:0px;top:239px;width:22px;height:1px;background:#d4d1cd;"></div>
<div class="t" style="left:1.80px;top:217.00px;font-size:14.8px;line-height:18px;color:#161616;letter-spacing:0.000px;font-weight:normal;">7</div>
<div class="b" style="left:22px;top:210px;width:236px;height:29px;background:#ffffff;"></div>
<div class="b" style="left:259px;top:210px;width:170px;height:29px;background:#fddcad;"></div>
<div class="b" style="left:529px;top:210px;width:56px;height:29px;background:#fddcad;"></div>
<div class="b" style="left:586px;top:210px;width:72px;height:29px;background:#fddcad;"></div>
<div class="b" style="left:659px;top:210px;width:146px;height:29px;background:#fddcad;"></div>
<div class="b" style="left:22px;top:239px;width:784px;height:1px;background:#d4d1cd;"></div>
<div class="b" style="left:258px;top:210px;width:1px;height:30px;background:#d4d1cd;"></div>
<div class="b" style="left:429px;top:210px;width:1px;height:30px;background:#d4d1cd;"></div>
<div class="b" style="left:528px;top:210px;width:1px;height:30px;background:#d4d1cd;"></div>
<div class="b" style="left:585px;top:210px;width:1px;height:30px;background:#d4d1cd;"></div>
<div class="b" style="left:658px;top:210px;width:1px;height:30px;background:#d4d1cd;"></div>
<div class="b" style="left:805px;top:210px;width:1px;height:30px;background:#d4d1cd;"></div>
<div class="b" style="left:22px;top:210px;width:206px;height:29px;border:1px solid #adaaa6;border-radius:2px;background:#ffffff;"></div>
<div class="b" style="left:207px;top:211px;width:20px;height:27px;border-left:1px solid #c4c1bd;background:linear-gradient(#fafafa,#ebeae8);border-radius:0 2px 2px 0;"></div>
<svg class="b" style="left:213.0px;top:222.75px" width="8" height="4.5"><path d="M0 0L8 0L4.0 4.5Z" fill="#444"/></svg>
<div class="b" style="left:45px;top:210px;width:161px;height:30px;overflow:hidden">
<div class="t" style="left:1.20px;top:7.00px;font-size:14.8px;line-height:18px;color:#161616;letter-spacing:0.727px;font-weight:normal;">numero_predial</div>
</div>
<div class="t" style="left:26.60px;top:218.00px;font-size:10px;line-height:12px;color:#6a6a6a;letter-spacing:0.000px;font-weight:bold;transform:scaleX(0.841);transform-origin:0 0;">abc</div>
<div class="b" style="left:234px;top:210px;width:24px;height:29px;border:1px solid #b8b5b1;border-radius:3px;background:linear-gradient(#fbfbfb,#ebeae8);"></div>
<svg class="b" style="left:240.3px;top:217.5px" width="11" height="13" viewBox="0 0 11 13"><path d="M9.3 2.6C8.6 1.2 6.9 0.9 5.6 1C3.4 1.1 2.1 2.3 2.2 3.7C2.3 5.2 3.9 5.9 6.2 5.9M6.2 5.9C3.4 5.9 1.2 7 1.3 8.9C1.4 10.9 3.6 11.6 5.6 11.6C7.4 11.6 8.9 10.9 9.6 9.6" fill="none" stroke="#553a72" stroke-width="1.15" stroke-linecap="round"/></svg>
<div class="b" style="left:259px;top:210px;width:170px;height:30px;overflow:hidden">
<div class="t" style="left:2.40px;top:6.00px;font-size:14.8px;line-height:18px;color:#161616;letter-spacing:0.727px;font-weight:normal;">numero_predial</div>
</div>
<div class="b" style="left:430px;top:210px;width:98px;height:29px;border:1px solid #adaaa6;border-radius:3px;background:linear-gradient(#fdfdfd,#ebeae8);"></div>
<div class="t" style="left:434.50px;top:217.00px;font-size:14.8px;line-height:18px;color:#161616;letter-spacing:0.705px;font-weight:normal;">String</div>
<svg class="b" style="left:513.0px;top:222.75px" width="8" height="4.5"><path d="M0 0L8 0L4.0 4.5Z" fill="#444"/></svg>
<div class="t" style="left:562.35px;top:216.00px;font-size:14.8px;line-height:18px;color:#161616;letter-spacing:0.689px;font-weight:normal;">30</div>
<div class="t" style="left:641.40px;top:216.00px;font-size:14.8px;line-height:18px;color:#161616;letter-spacing:0.243px;font-weight:normal;">-1</div>
<div class="t" style="left:662.00px;top:216.00px;font-size:14.8px;line-height:18px;color:#161616;letter-spacing:0.468px;font-weight:normal;">Constraints active</div>
<div class="b" style="left:0px;top:240px;width:21px;height:29px;background:linear-gradient(#f6f5f3,#ebeae8);"></div>
<div class="b" style="left:21px;top:240px;width:1px;height:29px;background:#c9c6c2;"></div>
<div class="b" style="left:0px;top:269px;width:22px;height:1px;background:#d4d1cd;"></div>
<div class="t" style="left:1.80px;top:247.00px;font-size:14.8px;line-height:18px;color:#161616;letter-spacing:0.000px;font-weight:normal;">8</div>
<div class="b" style="left:22px;top:240px;width:236px;height:29px;background:#ffffff;"></div>
<div class="b" style="left:22px;top:269px;width:784px;height:1px;background:#d4d1cd;"></div>
<div class="b" style="left:258px;top:240px;width:1px;height:30px;background:#d4d1cd;"></div>
<div class="b" style="left:429px;top:240px;width:1px;height:30px;background:#d4d1cd;"></div>
<div class="b" style="left:528px;top:240px;width:1px;height:30px;background:#d4d1cd;"></div>
<div class="b" style="left:585px;top:240px;width:1px;height:30px;background:#d4d1cd;"></div>
<div class="b" style="left:658px;top:240px;width:1px;height:30px;background:#d4d1cd;"></div>
<div class="b" style="left:805px;top:240px;width:1px;height:30px;background:#d4d1cd;"></div>
<div class="b" style="left:22px;top:240px;width:206px;height:29px;border:1px solid #adaaa6;border-radius:2px;background:#ffffff;"></div>
<div class="b" style="left:207px;top:241px;width:20px;height:27px;border-left:1px solid #c4c1bd;background:linear-gradient(#fafafa,#ebeae8);border-radius:0 2px 2px 0;"></div>
<svg class="b" style="left:213.0px;top:252.75px" width="8" height="4.5"><path d="M0 0L8 0L4.0 4.5Z" fill="#444"/></svg>
<div class="b" style="left:23px;top:240px;width:183px;height:30px;overflow:hidden">
<div class="t" style="left:5.56px;top:7.00px;font-size:14.8px;line-height:18px;color:#161616;letter-spacing:0.668px;font-weight:normal;">numero_predial_anterior</div>
</div>
<div class="t" style="left:26.60px;top:248.00px;font-size:10px;line-height:12px;color:#6a6a6a;letter-spacing:0.000px;font-weight:bold;background:#fff;transform:scaleX(0.841);transform-origin:0 0;">abc</div>
<div class="b" style="left:234px;top:240px;width:24px;height:29px;border:1px solid #b8b5b1;border-radius:3px;background:linear-gradient(#fbfbfb,#ebeae8);"></div>
<svg class="b" style="left:240.3px;top:247.5px" width="11" height="13" viewBox="0 0 11 13"><path d="M9.3 2.6C8.6 1.2 6.9 0.9 5.6 1C3.4 1.1 2.1 2.3 2.2 3.7C2.3 5.2 3.9 5.9 6.2 5.9M6.2 5.9C3.4 5.9 1.2 7 1.3 8.9C1.4 10.9 3.6 11.6 5.6 11.6C7.4 11.6 8.9 10.9 9.6 9.6" fill="none" stroke="#553a72" stroke-width="1.15" stroke-linecap="round"/></svg>
<div class="b" style="left:259px;top:240px;width:170px;height:30px;overflow:hidden">
<div class="t" style="left:2.40px;top:6.00px;font-size:14.8px;line-height:18px;color:#161616;letter-spacing:0.421px;font-weight:normal;">numero_predial_ante…</div>
</div>
<div class="b" style="left:430px;top:240px;width:98px;height:29px;border:1px solid #adaaa6;border-radius:3px;background:linear-gradient(#fdfdfd,#ebeae8);"></div>
<div class="t" style="left:434.50px;top:247.00px;font-size:14.8px;line-height:18px;color:#161616;letter-spacing:0.705px;font-weight:normal;">String</div>
<svg class="b" style="left:513.0px;top:252.75px" width="8" height="4.5"><path d="M0 0L8 0L4.0 4.5Z" fill="#444"/></svg>
<div class="t" style="left:562.35px;top:246.00px;font-size:14.8px;line-height:18px;color:#161616;letter-spacing:0.689px;font-weight:normal;">20</div>
<div class="t" style="left:641.40px;top:246.00px;font-size:14.8px;line-height:18px;color:#161616;letter-spacing:0.243px;font-weight:normal;">-1</div>
</div>
<div class="b" style="left:860px;top:213px;width:24px;height:23px;border:1px solid #b4b1ad;border-radius:3px;background:linear-gradient(#fbfbfb,#ebe9e7);"></div>
<div class="b" style="left:860px;top:242px;width:24px;height:23px;border:1px solid #b4b1ad;border-radius:3px;background:linear-gradient(#fbfbfb,#ebe9e7);"></div>
<div class="b" style="left:860px;top:271px;width:24px;height:23px;border:1px solid #b4b1ad;border-radius:3px;background:linear-gradient(#fbfbfb,#ebe9e7);"></div>
<div class="b" style="left:860px;top:300px;width:24px;height:23px;border:1px solid #b4b1ad;border-radius:3px;background:linear-gradient(#fbfbfb,#ebe9e7);"></div>
<div class="b" style="left:860px;top:329px;width:24px;height:23px;border:1px solid #b4b1ad;border-radius:3px;background:linear-gradient(#fbfbfb,#ebe9e7);"></div>
<svg class="b" style="left:864px;top:216px" width="17" height="17" viewBox="0 0 17 17"><rect x="1.2" y="1.2" width="13.6" height="13.4" rx="1" fill="#f4f8fc" stroke="#9fb9d6" stroke-width="0.8"/><rect x="1.2" y="1.2" width="13.6" height="5.8" rx="1" fill="#a9c5e2"/><path d="M9 3.4H14M9 5.2H14" stroke="#7fa3c9" stroke-width="0.8"/><path d="M2.5 8.5V14.5" stroke="#b9cde3" stroke-width="1.2" stroke-dasharray="1 1"/><path d="M9 8.5V14.5" stroke="#c9d9ea" stroke-width="1" stroke-dasharray="1 1"/><rect x="4.1" y="0.3" width="3.7" height="15.2" rx="0.8" fill="#e6cf68" stroke="#c9ad45" stroke-width="0.6"/><rect x="9.1" y="8.7" width="7" height="7" rx="1.2" fill="#c4a020"/><circle cx="12.5" cy="12.2" r="2.3" fill="#fff3b8"/><circle cx="12.5" cy="12.2" r="0.8" fill="#c4a020"/></svg>
<svg class="b" style="left:864px;top:245px" width="17" height="17" viewBox="0 0 17 17"><rect x="1.2" y="1.2" width="13.6" height="13.4" rx="1" fill="#f4f8fc" stroke="#9fb9d6" stroke-width="0.8"/><rect x="1.2" y="1.2" width="13.6" height="5.8" rx="1" fill="#a9c5e2"/><path d="M9 3.4H14M9 5.2H14" stroke="#7fa3c9" stroke-width="0.8"/><path d="M2.5 8.5V14.5" stroke="#b9cde3" stroke-width="1.2" stroke-dasharray="1 1"/><path d="M9 8.5V14.5" stroke="#c9d9ea" stroke-width="1" stroke-dasharray="1 1"/><rect x="4.1" y="0.3" width="3.7" height="15.2" rx="0.8" fill="#e58a92" stroke="#c9606a" stroke-width="0.6"/><rect x="9.1" y="8.7" width="7" height="7" rx="1.2" fill="#dc6470"/><path d="M10.9 10.5L14.3 13.9M14.3 10.5L10.9 13.9" stroke="#fff" stroke-width="1.5"/></svg>
<svg class="b" style="left:864px;top:274px" width="16" height="14"><path d="M8 2L14 12H2Z" fill="#4d80b6"/></svg>
<svg class="b" style="left:864px;top:304px" width="16" height="14"><path d="M1 1H15L8 12.5Z" fill="#4d80b6"/></svg>
<svg class="b" style="left:864px;top:333px" width="16" height="14" viewBox="0 0 16 14"><path d="M5 1.5H14.5V12.5H5L0.8 7Z" fill="#a3a3a3"/><path d="M7.5 4.3L11.7 9.7M11.7 4.3L7.5 9.7" stroke="#ffffff" stroke-width="1.5"/></svg>
<svg class="b" style="left:801px;top:259px" width="16" height="22" viewBox="0 0 16 22"><path d="M1.5 1V18L5.5 14L8.5 20.5L11 19.5L8 13H13.5Z" fill="#f8f8f8" stroke="#000" stroke-width="1.2" stroke-linejoin="miter"/></svg>
<div class="b" style="left:805px;top:277px;width:140px;height:28px;border:1px solid #111;background:#fbfbd9;box-shadow:1px 2px 3px rgba(0,0,0,0.3);"></div>
<div class="t" style="left:809.00px;top:283.00px;font-size:14.8px;line-height:18px;color:#111;letter-spacing:0.294px;font-weight:normal;">NOT NULL, Unique</div></body></html>
